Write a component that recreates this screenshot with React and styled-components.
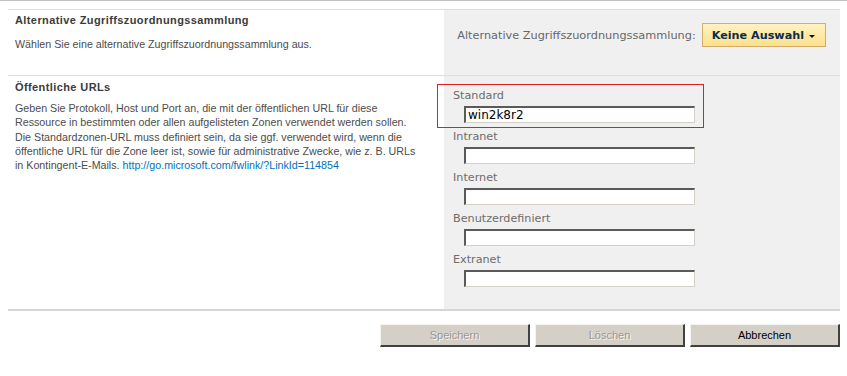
import styled, { createGlobalStyle } from "styled-components";

const GlobalStyle = createGlobalStyle`
  html, body {
    margin: 0;
    padding: 0;
    background: #fff;
  }
  body {
    font-family: "Liberation Sans", Arial, sans-serif;
    font-size: 11px;
    color: #4c4c4c;
  }
`;

const TopRule = styled.div`
  height: 1px;
  background: #c2c2c2;
`;

const Page = styled.div`
  margin: 8px 7px 0 8px;
`;

const Section = styled.div`
  display: grid;
  grid-template-columns: 436px 396px;
  border-top: 1px solid #dedede;
`;

const Info = styled.div`
  padding: ${(p) => p.$pad || "3px 0 0 7px"};
`;

const Title = styled.h3`
  margin: 0;
  font-family: "Liberation Sans", Arial, sans-serif;
  font-size: 11px;
  line-height: 14px;
  letter-spacing: 0.4px;
  font-weight: bold;
  color: #3b3b3b;
`;

const Description = styled.p`
  margin: ${(p) => p.$gap || "10px"} 0 0 0;
  font-size: 10.7px;
  line-height: 14.25px;
  color: #4c4c4c;
`;

const Link = styled.a`
  color: #0072bc;
  text-decoration: none;
`;

const Panel = styled.div`
  position: relative;
  background: #f0f0f0;
  padding: ${(p) => p.$pad};
`;

const ChoiceRow = styled.div`
  display: flex;
  align-items: center;
  justify-content: flex-end;
  gap: 6px;
  white-space: nowrap;
`;

const ChoiceLabel = styled.span`
  flex-shrink: 0;
  font-family: "DejaVu Sans", Verdana, sans-serif;
  font-size: 11.3px;
  color: #676767;
`;

const MenuButton = styled.button`
  flex-shrink: 0;
  display: flex;
  align-items: center;
  gap: 5px;
  height: 24px;
  padding: 0 10px 0 9px;
  border: 1px solid #d3ad6a;
  background: linear-gradient(#fff3c0, #fde08c);
  font-family: "DejaVu Sans", Verdana, sans-serif;
  font-size: 11.2px;
  font-weight: bold;
  color: #0b2c4d;
  white-space: nowrap;
  cursor: pointer;
`;

const Caret = styled.span`
  width: 0;
  height: 0;
  border-left: 3px solid transparent;
  border-right: 3px solid transparent;
  border-top: 3px solid #111;
  margin-top: 2px;
`;

const Highlight = styled.div`
  position: absolute;
  left: -7px;
  top: 8px;
  width: 265px;
  height: 42px;
  border: 1px solid #e02020;
  pointer-events: none;
`;

const Field = styled.div`
  margin-bottom: 6px;
`;

const FieldLabel = styled.label`
  display: block;
  font-family: "DejaVu Sans", Verdana, sans-serif;
  font-size: 11.2px;
  line-height: 14px;
  color: #6d6d6d;
  margin-bottom: 3px;
  padding-top: 1px;
`;

const TextBox = styled.input`
  display: block;
  box-sizing: border-box;
  width: 231px;
  height: 17px;
  margin-left: 11px;
  padding: 0 2px;
  border-style: solid;
  border-width: 2px 1px 1px 2px;
  border-color: #5a5a5a #d4d0c8 #d4d0c8 #5a5a5a;
  background: #fff;
  font-family: "DejaVu Sans", Verdana, sans-serif;
  font-size: 12px;
  color: #000;
  outline: none;
`;

const Footer = styled.div`
  border-top: 2px solid #d6d6d6;
  display: flex;
  justify-content: flex-end;
  gap: 5px;
  padding-top: 13px;
`;

const ActionButton = styled.button`
  box-sizing: border-box;
  width: 150px;
  height: 23px;
  background: #d4d0c8;
  border-style: solid;
  border-width: 1px 2px 2px 1px;
  border-color: #f4f3ef #404040 #404040 #f4f3ef;
  font-family: "Liberation Sans", Arial, sans-serif;
  font-size: 11px;
  color: ${(p) => (p.disabled ? "#9b988f" : "#000")};
  text-shadow: ${(p) => (p.disabled ? "1px 1px 0 #f4f3ef" : "none")};
  cursor: pointer;
`;

const zones = [
  { name: "Standard", value: "win2k8r2" },
  { name: "Intranet", value: "" },
  { name: "Internet", value: "" },
  { name: "Benutzerdefiniert", value: "" },
  { name: "Extranet", value: "" },
];

export default function App() {
  return (
    <>
      <GlobalStyle />
      <TopRule />
      <Page>
        <Section>
          <Info>
            <Title>Alternative Zugriffszuordnungssammlung</Title>
            <Description>Wählen Sie eine alternative Zugriffszuordnungssammlung aus.</Description>
          </Info>
          <Panel $pad="13px 14px 28px 0">
            <ChoiceRow>
              <ChoiceLabel>Alternative Zugriffszuordnungssammlung:</ChoiceLabel>
              <MenuButton>
                Keine Auswahl <Caret />
              </MenuButton>
            </ChoiceRow>
          </Panel>
        </Section>

        <Section>
          <Info $pad="4px 0 0 7px">
            <Title>Öffentliche URLs</Title>
            <Description $gap="7px">
              Geben Sie Protokoll, Host und Port an, die mit der öffentlichen URL für diese
              <br />
              Ressource in bestimmten oder allen aufgelisteten Zonen verwendet werden sollen.
              <br />
              Die Standardzonen-URL muss definiert sein, da sie ggf. verwendet wird, wenn die
              <br />
              öffentliche URL für die Zone leer ist, sowie für administrative Zwecke, wie z. B. URLs
              <br />
              in Kontingent-E-Mails.{" "}
              <Link href="#">http://go.microsoft.com/fwlink/?LinkId=114854</Link>
            </Description>
          </Info>
          <Panel $pad="12px 0 16px 9px">
            <Highlight />
            {zones.map((z) => (
              <Field key={z.name}>
                <FieldLabel>{z.name}</FieldLabel>
                <TextBox defaultValue={z.value} />
              </Field>
            ))}
          </Panel>
        </Section>

        <Footer>
          <ActionButton disabled>Speichern</ActionButton>
          <ActionButton disabled>Löschen</ActionButton>
          <ActionButton>Abbrechen</ActionButton>
        </Footer>
      </Page>
    </>
  );
}
